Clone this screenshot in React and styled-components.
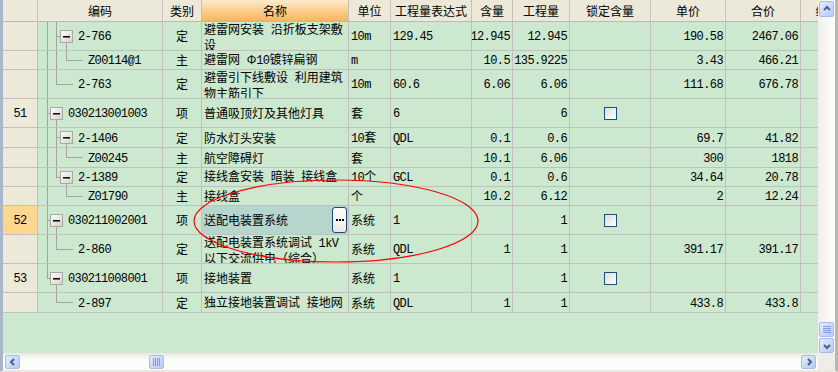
import React from 'react';
import styled, { createGlobalStyle } from 'styled-components';

const GRID = '#C0C0C0';
const GREEN = '#CCE8CF';
const BEIGE = '#ECE9D8';
const COLS = [35, 125, 39, 147, 42, 81, 41, 57, 81, 75, 75, 78];
const TEMPLATE = COLS.map((w) => `${w}px`).join(' ');

const GlobalStyle = createGlobalStyle`
  html, body { margin: 0; padding: 0; background: #ffffff; }
  body {
    font-family: "Noto Sans CJK SC", "Noto Sans", sans-serif;
    font-size: 12px;
    color: #000;
  }
  #root { width: 838px; height: 372px; }
`;

const Window = styled.div`
  box-sizing: border-box;
  width: 838px;
  height: 372px;
  border-left: 3px solid #a9b6ca;
  border-right: 3px solid #b7b6b0;
  border-bottom: 2px solid #eae8df;
  display: grid;
  grid-template-columns: 815px 17px;
  grid-template-rows: 353px 17px;
  overflow: hidden;
`;

const Viewport = styled.div`
  position: relative;
  overflow: hidden;
  background: ${GREEN};
`;

const Row = styled.div`
  display: grid;
  grid-template-columns: ${TEMPLATE};
  width: max-content;
  height: ${(p) => p.$h}px;
`;

const HeadCell = styled.div`
  box-sizing: border-box;
  border-right: 1px solid #c3c0b4;
  border-bottom: 1px solid #b9b9b9;
  background: ${(p) =>
    p.$active ? 'linear-gradient(#fdebcb, #f9c479 70%, #f6b660)' : BEIGE};
  display: flex;
  align-items: center;
  justify-content: center;
  white-space: nowrap;
  overflow: hidden;
  font-size: 12px;
  line-height: 14px;
`;

const Cell = styled.div`
  box-sizing: border-box;
  border-right: 1px solid ${GRID};
  border-bottom: 1px solid ${GRID};
  background: ${GREEN};
  display: flex;
  align-items: center;
  justify-content: ${(p) =>
    ({ right: 'flex-end', center: 'center' }[p.$align] || 'flex-start')};
  padding: 0 2px;
  overflow: hidden;
  white-space: nowrap;
  line-height: 14px;
`;

const RowHead = styled(Cell)`
  background: ${(p) => (p.$current ? '#ffd68f' : BEIGE)};
  justify-content: center;
`;

const TreeCell = styled(Cell)`
  align-items: stretch;
  padding: 0;
`;

const TreeLabel = styled.span`
  align-self: center;
`;

const TreeSvg = styled.svg`
  flex: none;
  display: block;
`;

const NameCell = styled(Cell)`
  background: ${(p) => (p.$selected ? '#b6d6cd' : GREEN)};
  padding: 0 1px 0 2px;
`;

const Lines = styled.span`
  display: flex;
  flex-direction: column;
  line-height: 13px;
`;

const Mono = styled.span`
  font-family: "Liberation Mono", "DejaVu Sans Mono", monospace;
  letter-spacing: -0.6px;
`;

const EllipsisButton = styled.span`
  box-sizing: border-box;
  margin-left: auto;
  flex: none;
  width: 15px;
  height: 26px;
  border: 1px solid #24467a;
  border-radius: 3px;
  background: linear-gradient(#ffffff, #e9e9e3);
  display: flex;
  align-items: center;
  justify-content: center;
  gap: 1px;
`;

const Dot = styled.i`
  width: 2px;
  height: 2px;
  background: #000;
`;

const CheckBox = styled.span`
  box-sizing: border-box;
  width: 13px;
  height: 13px;
  border: 1px solid #1c5180;
  background: linear-gradient(135deg, #dcdcd7, #ffffff);
`;

const Annotation = styled.svg`
  position: absolute;
  left: 0;
  top: 0;
  pointer-events: none;
`;

const VScroll = styled.div`
  display: flex;
  flex-direction: column;
  align-items: flex-end;
  padding: 1px 1px 0 0;
  box-sizing: border-box;
  background: linear-gradient(to right, #f1f0ea, #fdfdfb);
`;

const HScroll = styled.div`
  display: flex;
  align-items: flex-end;
  padding: 0 2px 1px 1px;
  box-sizing: border-box;
  background: linear-gradient(#e9e8e1, #fdfdfc 40%, #fbfbf9);
`;

const Corner = styled.div`
  background: #eeede6;
`;

const Track = styled.div`
  flex: 1;
`;

const ScrollPart = styled.div`
  box-sizing: border-box;
  flex: none;
  width: ${(p) => p.$w}px;
  height: ${(p) => p.$h}px;
  margin: ${(p) => p.$m || '0'};
  border: 1px solid #a9bcee;
  border-radius: 2px;
  background: linear-gradient(135deg, #e4ecfe 0%, #c9d8fb 55%, #b7caf5 100%);
  display: flex;
  align-items: center;
  justify-content: center;
`;

const Chevron = ({ dir }) => {
  const pts = {
    up: '1,5 4,2 7,5',
    down: '1,3 4,6 7,3',
    left: '5,1 2,4 5,7',
    right: '3,1 6,4 3,7',
  }[dir];
  return (
    <svg width="8" height="8" viewBox="0 0 8 8">
      <polyline points={pts} fill="none" stroke="#4d6185" strokeWidth="2" />
    </svg>
  );
};

const Grip = ({ horizontal }) => (
  <svg width="8" height="8" viewBox="0 0 8 8">
    {[0, 2, 4, 6].map((i) =>
      horizontal ? (
        <line key={i} x1={i + 0.5} y1="0" x2={i + 0.5} y2="8" stroke="#7e9cdb" />
      ) : (
        <line key={i} x1="0" y1={i + 0.5} x2="8" y2={i + 0.5} stroke="#7e9cdb" />
      )
    )}
  </svg>
);

const renderText = (s) =>
  (s.match(/[\x20-\x7e]+|[^\x20-\x7e]+/g) || []).map((part, i) =>
    /^[\x20-\x7e]/.test(part) ? (
      <Mono key={i}>{part}</Mono>
    ) : (
      <React.Fragment key={i}>{part}</React.Fragment>
    )
  );

function Text({ value }) {
  if (value == null) return null;
  if (Array.isArray(value)) {
    return (
      <Lines>
        {value.map((l, i) => (
          <span key={i}>{renderText(l)}</span>
        ))}
      </Lines>
    );
  }
  return <span>{renderText(value)}</span>;
}

const LINE = '#a3a3a3';

function TreeGlyph({ h, t, id }) {
  const H = h - 1;
  const m = Math.floor(H / 2);
  const y = m + 0.5;
  const w = [0, 30, 40, 50][t.lv];
  const X = [9.5, 18.5, 28.5];
  const seg = [];
  if (t.a === 'full') seg.push([X[0], 0, X[0], H]);
  if (t.a === 'top') seg.push([X[0], 0, X[0], y]);
  if (t.b === 'full') seg.push([X[1], 0, X[1], H]);
  if (t.b === 'top') seg.push([X[1], 0, X[1], y]);
  if (t.b === 'below') seg.push([X[1], m + 7, X[1], H]);
  if (t.c === 'top') seg.push([X[2], 0, X[2], y]);
  if (t.c === 'below') seg.push([X[2], m + 7, X[2], H]);
  if (t.lv === 1) seg.push([X[0] - 0.5, y, 12, y]);
  if (t.lv === 2) seg.push([X[1] - 0.5, y, t.box ? 22 : 35, y]);
  if (t.lv === 3) seg.push([X[2] - 0.5, y, 45, y]);
  const bx = t.lv === 1 ? 12 : 22;
  return (
    <TreeSvg width={w} height={H} viewBox={`0 0 ${w} ${H}`}>
      <defs>
        <linearGradient id={id} x1="0" y1="0" x2="1" y2="1">
          <stop offset="0" stopColor="#ffffff" />
          <stop offset="1" stopColor="#d3d0c8" />
        </linearGradient>
      </defs>
      {seg.map(([x1, y1, x2, y2], i) => (
        <line key={i} x1={x1} y1={y1} x2={x2} y2={y2} stroke={LINE} strokeWidth="1" />
      ))}
      {t.box && (
        <>
          <rect x={bx + 0.5} y={m - 5.5} width="12" height="12" fill={`url(#${id})`} stroke="#a8a8a8" />
          <rect x={bx + 3} y={m} width="7" height="1.6" fill="#111" />
        </>
      )}
    </TreeSvg>
  );
}

const HEADERS = ['', '编码', '类别', '名称', '单位', '工程量表达式', '含量', '工程量', '锁定含量', '单价', '合价', '综合单价'];

const ROWS = [
  { h: 29, tree: { lv: 2, box: true, a: 'full', b: 'full', c: 'below' }, code: '2-766', type: '定', name: ['避雷网安装 沿折板支架敷', '设'], unit: '10m', expr: '129.45', hl: '12.945', qty: '12.945', price: '190.58', total: '2467.06' },
  { h: 19, tree: { lv: 3, a: 'full', b: 'full', c: 'top' }, code: 'Z00114@1', type: '主', name: '避雷网 Φ10镀锌扁钢', unit: 'm', hl: '10.5', qty: '135.9225', price: '3.43', total: '466.21' },
  { h: 29, tree: { lv: 2, a: 'full', b: 'top' }, code: '2-763', type: '定', name: ['避雷引下线敷设 利用建筑', '物主筋引下'], unit: '10m', expr: '60.6', hl: '6.06', qty: '6.06', price: '111.68', total: '676.78' },
  { h: 29, no: '51', tree: { lv: 1, box: true, a: 'full', b: 'below' }, code: '030213001003', type: '项', name: '普通吸顶灯及其他灯具', unit: '套', expr: '6', qty: '6', lock: true },
  { h: 20, tree: { lv: 2, box: true, a: 'full', b: 'full', c: 'below' }, code: '2-1406', type: '定', name: '防水灯头安装', unit: '10套', expr: 'QDL', hl: '0.1', qty: '0.6', price: '69.7', total: '41.82' },
  { h: 20, tree: { lv: 3, a: 'full', b: 'full', c: 'top' }, code: 'Z00245', type: '主', name: '航空障碍灯', unit: '套', hl: '10.1', qty: '6.06', price: '300', total: '1818' },
  { h: 19, tree: { lv: 2, box: true, a: 'full', b: 'top', c: 'below' }, code: '2-1389', type: '定', name: '接线盒安装 暗装 接线盒', unit: '10个', expr: 'GCL', hl: '0.1', qty: '0.6', price: '34.64', total: '20.78' },
  { h: 19, tree: { lv: 3, a: 'full', c: 'top' }, code: 'Z01790', type: '主', name: '接线盒', unit: '个', hl: '10.2', qty: '6.12', price: '2', total: '12.24' },
  { h: 29, no: '52', current: true, selected: true, tree: { lv: 1, box: true, a: 'full', b: 'below' }, code: '030211002001', type: '项', name: '送配电装置系统', unit: '系统', expr: '1', qty: '1', lock: true },
  { h: 29, tree: { lv: 2, a: 'full', b: 'top' }, code: '2-860', type: '定', name: ['送配电装置系统调试 1kV', '以下交流供电（综合）'], unit: '系统', expr: 'QDL', hl: '1', qty: '1', price: '391.17', total: '391.17' },
  { h: 29, no: '53', tree: { lv: 1, box: true, a: 'top', b: 'below' }, code: '030211008001', type: '项', name: '接地装置', unit: '系统', expr: '1', qty: '1', lock: true },
  { h: 20, tree: { lv: 2, b: 'top' }, code: '2-897', type: '定', name: '独立接地装置调试 接地网', unit: '系统', expr: 'QDL', hl: '1', qty: '1', price: '433.8', total: '433.8' },
];

function DataRow({ r, i }) {
  return (
    <Row $h={r.h}>
      <RowHead $current={r.current}>
        <Text value={r.no} />
      </RowHead>
      <TreeCell>
        <TreeGlyph h={r.h} t={r.tree} id={`bx${i}`} />
        <TreeLabel>
          <Text value={r.code} />
        </TreeLabel>
      </TreeCell>
      <Cell $align="center">
        <Text value={r.type} />
      </Cell>
      <NameCell $selected={r.selected}>
        <Text value={r.name} />
        {r.selected && (
          <EllipsisButton>
            <Dot />
            <Dot />
            <Dot />
          </EllipsisButton>
        )}
      </NameCell>
      <Cell>
        <Text value={r.unit} />
      </Cell>
      <Cell>
        <Text value={r.expr} />
      </Cell>
      <Cell $align="right">
        <Text value={r.hl} />
      </Cell>
      <Cell $align="right">
        <Text value={r.qty} />
      </Cell>
      <Cell $align="center">{r.lock && <CheckBox />}</Cell>
      <Cell $align="right">
        <Text value={r.price} />
      </Cell>
      <Cell $align="right">
        <Text value={r.total} />
      </Cell>
      <Cell />
    </Row>
  );
}

export default function App() {
  return (
    <>
      <GlobalStyle />
      <Window>
        <Viewport>
          <Row $h={22}>
            {HEADERS.map((h, i) => (
              <HeadCell key={i} $active={h === '名称'}>
                {h}
              </HeadCell>
            ))}
          </Row>
          {ROWS.map((r, i) => (
            <DataRow key={i} r={r} i={i} />
          ))}
          <Annotation width="815" height="353" viewBox="0 0 815 353">
            <ellipse cx="333" cy="221" rx="142" ry="41" fill="none" stroke="#ff0000" strokeWidth="1.2" />
          </Annotation>
        </Viewport>
        <VScroll>
          <ScrollPart $w={15} $h={16}>
            <Chevron dir="up" />
          </ScrollPart>
          <Track />
          <ScrollPart $w={15} $h={15} $m="0 0 1px 0">
            <Grip />
          </ScrollPart>
          <ScrollPart $w={15} $h={15}>
            <Chevron dir="down" />
          </ScrollPart>
        </VScroll>
        <HScroll>
          <ScrollPart $w={15} $h={14} $m="0 0 0 1px">
            <Chevron dir="left" />
          </ScrollPart>
          <ScrollPart $w={15} $h={14} $m="0 0 0 129px">
            <Grip horizontal />
          </ScrollPart>
          <Track />
          <ScrollPart $w={15} $h={14}>
            <Chevron dir="right" />
          </ScrollPart>
        </HScroll>
        <Corner />
      </Window>
    </>
  );
}
